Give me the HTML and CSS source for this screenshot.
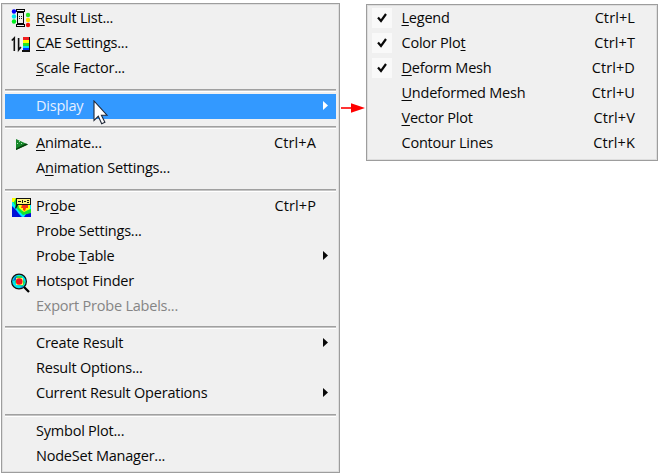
FILE: index.html
```html
<!DOCTYPE html>
<html lang="en">
<head>
<meta charset="utf-8">
<title>Display menu</title>
<link rel="stylesheet" href="styles.css">
</head>
<body>
<div class="stage">
<ul class="menu main">
  <li class="item"><svg class="icon" width="22" height="24" viewBox="0 0 22 24"><path fill="#050505" d="M7 3h9v3h-1v12h1v3H7v-3h1V6H7z"/><path fill="#eee" d="M8 4h7v1H8zM9 7h5v10H9zM8 19h7v1H8z"/><path fill="#222" d="M10 10h1v1h-1zM12 10h1v1h-1zM10 12h1v1h-1zM12 12h1v1h-1z"/><g><circle cx="5" cy="5.5" r="2.2" fill="#00f"/><circle cx="5" cy="10.5" r="2.2" fill="#00e5ef"/><circle cx="5" cy="15.5" r="2.2" fill="#00f020"/><circle cx="19" cy="9" r="2.2" fill="#28e628"/><circle cx="19" cy="14" r="2.2" fill="#ffe000"/><circle cx="19" cy="19" r="2.2" fill="#f01010"/></g></svg><span class="label"><u>R</u>esult List...</span></li>
  <li class="item"><svg class="icon" width="22" height="24" viewBox="0 0 22 24"><path fill="none" stroke="#111" stroke-width="1.6" d="M5.3 20V7L2.8 9.5M9.6 7v12l2.3-3"/><path fill="#111" d="M14 6h7v15h-8v-2h1z"/><path fill="#f02020" d="M14 6h6v3h-6z"/><path fill="#ff0" d="M14 9h6v3h-6z"/><path fill="#20e420" d="M14 12h6v3h-6z"/><path fill="#00dfff" d="M14 15h6v2h-6z"/><path fill="#0030ff" d="M14 17h6v2h-6z"/></svg><span class="label"><u>C</u>AE Settings...</span></li>
  <li class="item"><span class="label"><u>S</u>cale Factor...</span></li>
  <li class="sep"></li>
  <li class="item selected"><span class="label">Display</span><i class="arrow"></i>
    <svg class="cursor" width="16" height="26" viewBox="0 0 16 26"><path fill="#fff" stroke="#202838" stroke-width="1.1" d="M1 1v19.5l4.3-4.2 3.4 7.4 3.2-1.4-3.5-7.1H14z"/></svg></li>
  <li class="sep tight"></li>
  <li class="item"><svg class="icon" width="22" height="24" viewBox="0 0 22 24"><path fill="#16882a" d="M7 8l12 5.5L7 19z"/><path fill="#063f0c" d="M7 17.5l10-5 2 1L7 19z"/><path fill="#b5deb8" d="M10 10h1v1h-1zM8 12h1v1H8zM12 12h1v1h-1z"/></svg><span class="label"><u>A</u>nimate...</span><span class="key">Ctrl+A</span></li>
  <li class="item"><span class="label">A<u>n</u>imation Settings...</span></li>
  <li class="sep"></li>
  <li class="item"><svg class="icon" width="22" height="24" viewBox="0 0 22 24"><path fill="#00eaff" d="M3 4h19v19H3z"/><path fill="#0010d8" d="M3 12l4 4 3 4 3 3H3zM17 20l5-2v5h-7z"/><path fill="#15e42c" d="M4 4h4l1 7 4 6 9-2v4l-8 2-5-5-5-8z"/><path fill="#ff0" d="M3 4h4l-2 4H3zM9 9h12v6l-6 3-5-4z"/><path fill="#f33516" d="M13 11h6v3h-2l-1 3-2-1v-2h-2z"/><path fill="#111" d="M7 4h15v7H9l-2 4-1-1 1-3z"/><path fill="#fff478" d="M8 5h13v5H8z"/><path fill="#111" d="M9 7h3v1H9zM13 6h1v3h-1zM15 7h2v1h-2zM18 6h2v1h-2zM18 8h2v1h-2z"/></svg><span class="label">Pr<u>o</u>be</span><span class="key">Ctrl+P</span></li>
  <li class="item"><span class="label">Probe Settings...</span></li>
  <li class="item"><span class="label">Probe <u>T</u>able</span><i class="arrow"></i></li>
  <li class="item"><svg class="icon" width="22" height="24" viewBox="0 0 22 24"><path stroke="#000" stroke-width="2.3" d="M15 18l5 5"/><circle cx="10" cy="12.5" r="7.4" fill="#00e4ed" stroke="#111" stroke-width="1.2"/><path fill="#075fd0" d="M4 12l2-4 2-1-1 4zM11 18l4-1-2 2z"/><path fill="#28dc4f" d="M8 7h5v3l3 3-2 4-6-1-2-3z"/><path fill="#fff266" d="M7 9h7v7H7z"/><circle cx="10.2" cy="12.5" r="3.3" fill="#f5121b"/></svg><span class="label">Hotspot Finder</span></li>
  <li class="item disabled"><span class="label">Export Probe Labels...</span></li>
  <li class="sep tight"></li>
  <li class="item"><span class="label">Create Result</span><i class="arrow"></i></li>
  <li class="item"><span class="label">Result Options...</span></li>
  <li class="item"><span class="label">Current Result Operations</span><i class="arrow"></i></li>
  <li class="sep"></li>
  <li class="item"><span class="label">Symbol Plot...</span></li>
  <li class="item"><span class="label">NodeSet Manager...</span></li>
</ul>
<svg class="pointer" width="27" height="12" viewBox="0 0 27 12"><path stroke="#f00" stroke-width="1.6" d="M1 6h13"/><path fill="#f00" d="M11 1.3L25 6l-14 4.7z"/></svg>
<ul class="menu sub">
  <li class="item"><span class="check"><svg width="10" height="10" viewBox="0 0 10 10"><path d="M1 4.5L4 8 9 1" /></svg></span><span class="label"><u>L</u>egend</span><span class="key">Ctrl+L</span></li>
  <li class="item"><span class="check"><svg width="10" height="10" viewBox="0 0 10 10"><path d="M1 4.5L4 8 9 1" /></svg></span><span class="label">Color Plo<u>t</u></span><span class="key">Ctrl+T</span></li>
  <li class="item"><span class="check"><svg width="10" height="10" viewBox="0 0 10 10"><path d="M1 4.5L4 8 9 1" /></svg></span><span class="label"><u>D</u>eform Mesh</span><span class="key">Ctrl+D</span></li>
  <li class="item"><span class="label"><u>U</u>ndeformed Mesh</span><span class="key">Ctrl+U</span></li>
  <li class="item"><span class="label"><u>V</u>ector Plot</span><span class="key">Ctrl+V</span></li>
  <li class="item"><span class="label">Contour Lines</span><span class="key">Ctrl+K</span></li>
</ul>
</div>
</body>
</html>
```
FILE: styles.css
```css
* { box-sizing: border-box; }
body { margin: 0; background: #fff; overflow: hidden; font-family: "Open Sans", sans-serif; font-size: 14.5px; font-stretch: 93%; letter-spacing: -.22px; color: #080808; }
.stage { display: flex; align-items: flex-start; padding: 3px 0 0 1px; }
.menu { list-style: none; margin: 0; background: #f0f0f0; border: 1px solid #9d9d9d; box-shadow: inset 0 0 0 1px #dedede; }
.main { width: 339px; height: 470px; padding: 2px 3px 0; }
.sub { width: 292px; height: 157px; margin-top: 1px; margin-left: -1px; padding: 0 3px; }
.item { position: relative; display: flex; align-items: center; height: 25px; padding: 0 20px 0 31px; white-space: nowrap; line-height: 23px; }
.sub .item { padding-left: 31.5px; padding-right: 19px; }
.label, .key { margin-top: -1px; }
.main .label, .main .key { margin-top: -3px; }
.key { margin-left: auto; letter-spacing: .1px; }
u { text-decoration-thickness: 1px; text-underline-offset: 2px; text-decoration-skip-ink: none; }
.sep { height: 13px; padding-top: 8px; }
.sep.tight { height: 12px; padding-top: 7px; }
.sep::before { content: ""; display: block; height: 3px; background: linear-gradient(#a0a0a0 1px, #c4c4c4 1px 2px, #fff 2px); }
.selected { background: #3399ff; color: #e5efff; }
.disabled { color: #858585; }
.icon { flex: none; margin: -1px 5px 0 -27px; }
.arrow { width: 5px; height: 9px; margin: -2px -12px 0 auto; background: currentColor; clip-path: polygon(0 0, 100% 50%, 0 100%); }
.selected .arrow { background: #fff; }
.check { display: flex; align-items: center; justify-content: center; width: 20px; height: 20px; margin-left: -30px; margin-right: 10px; background: #f9f9f9; }
.check path { fill: none; stroke: #080808; stroke-width: 2.2; }
.cursor { position: absolute; left: 88px; top: 6px; z-index: 1; }
.pointer { flex: none; margin-top: 99px; }
```
